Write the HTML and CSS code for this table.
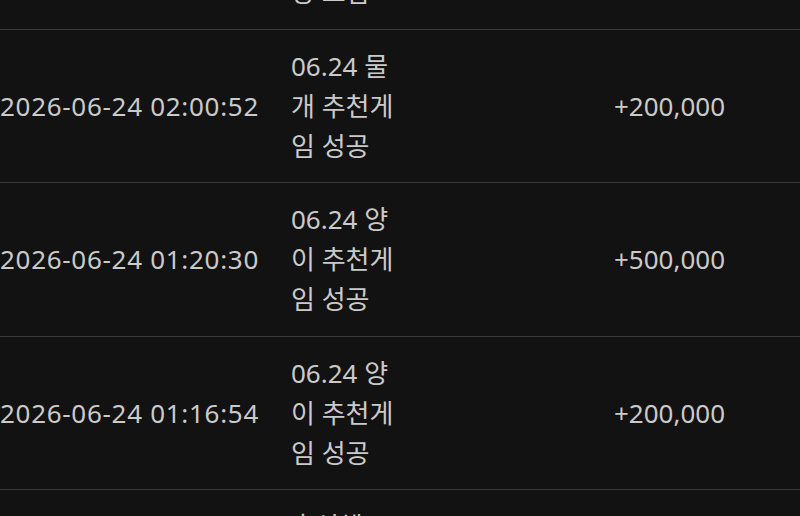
FILE: index.html
```html
<!DOCTYPE html>
<html lang="ko">
<head>
  <meta charset="UTF-8">
  <meta name="viewport" content="width=device-width, initial-scale=1.0">
  <title>포인트 내역</title>
  <link rel="stylesheet" href="styles.css">
</head>
<body>

<section class="history">
  <div class="row">
    <div class="date">2026-06-24 03:12:07</div>
    <div class="memo">06.24 출석 체크 보상 드림</div>
    <div class="amount">+100,000</div>
  </div>
  <div class="row">
    <div class="date">2026-06-24 02:00:52</div>
    <div class="memo">06.24 물개 추천게임 성공</div>
    <div class="amount">+200,000</div>
  </div>
  <div class="row">
    <div class="date">2026-06-24 01:20:30</div>
    <div class="memo">06.24 양이 추천게임 성공</div>
    <div class="amount">+500,000</div>
  </div>
  <div class="row">
    <div class="date">2026-06-24 01:16:54</div>
    <div class="memo">06.24 양이 추천게임 성공</div>
    <div class="amount">+200,000</div>
  </div>
  <div class="row">
    <div class="date">2026-06-23 23:41:18</div>
    <div class="memo">출석체크 보상 지급</div>
    <div class="amount">+50,000</div>
  </div>
</section>

</body>
</html>
```

FILE: styles.css
```css
* { box-sizing: border-box; }
body {
  margin: 0;
  background: #121212;
  color: #cacaca;
  font-family: 'Noto Sans', 'Noto Sans CJK KR', sans-serif;
  font-size: 26px;
  overflow: hidden;
}
/* list is scrolled: previous row only partly visible */
.history {
  margin-top: -124px;
}
.row {
  display: grid;
  grid-template-columns: 258px 115px 1fr;
  column-gap: 33px;
  align-items: center;
  padding: 16px 0 16.5px;
  line-height: 40px;
  border-bottom: 1px solid #3a3a3a;
}
.date {
  text-align: right;
  white-space: nowrap;
  letter-spacing: 0.7px;
}
.memo {
  word-break: normal;
}
.amount {
  padding-left: 175px;
}
```
